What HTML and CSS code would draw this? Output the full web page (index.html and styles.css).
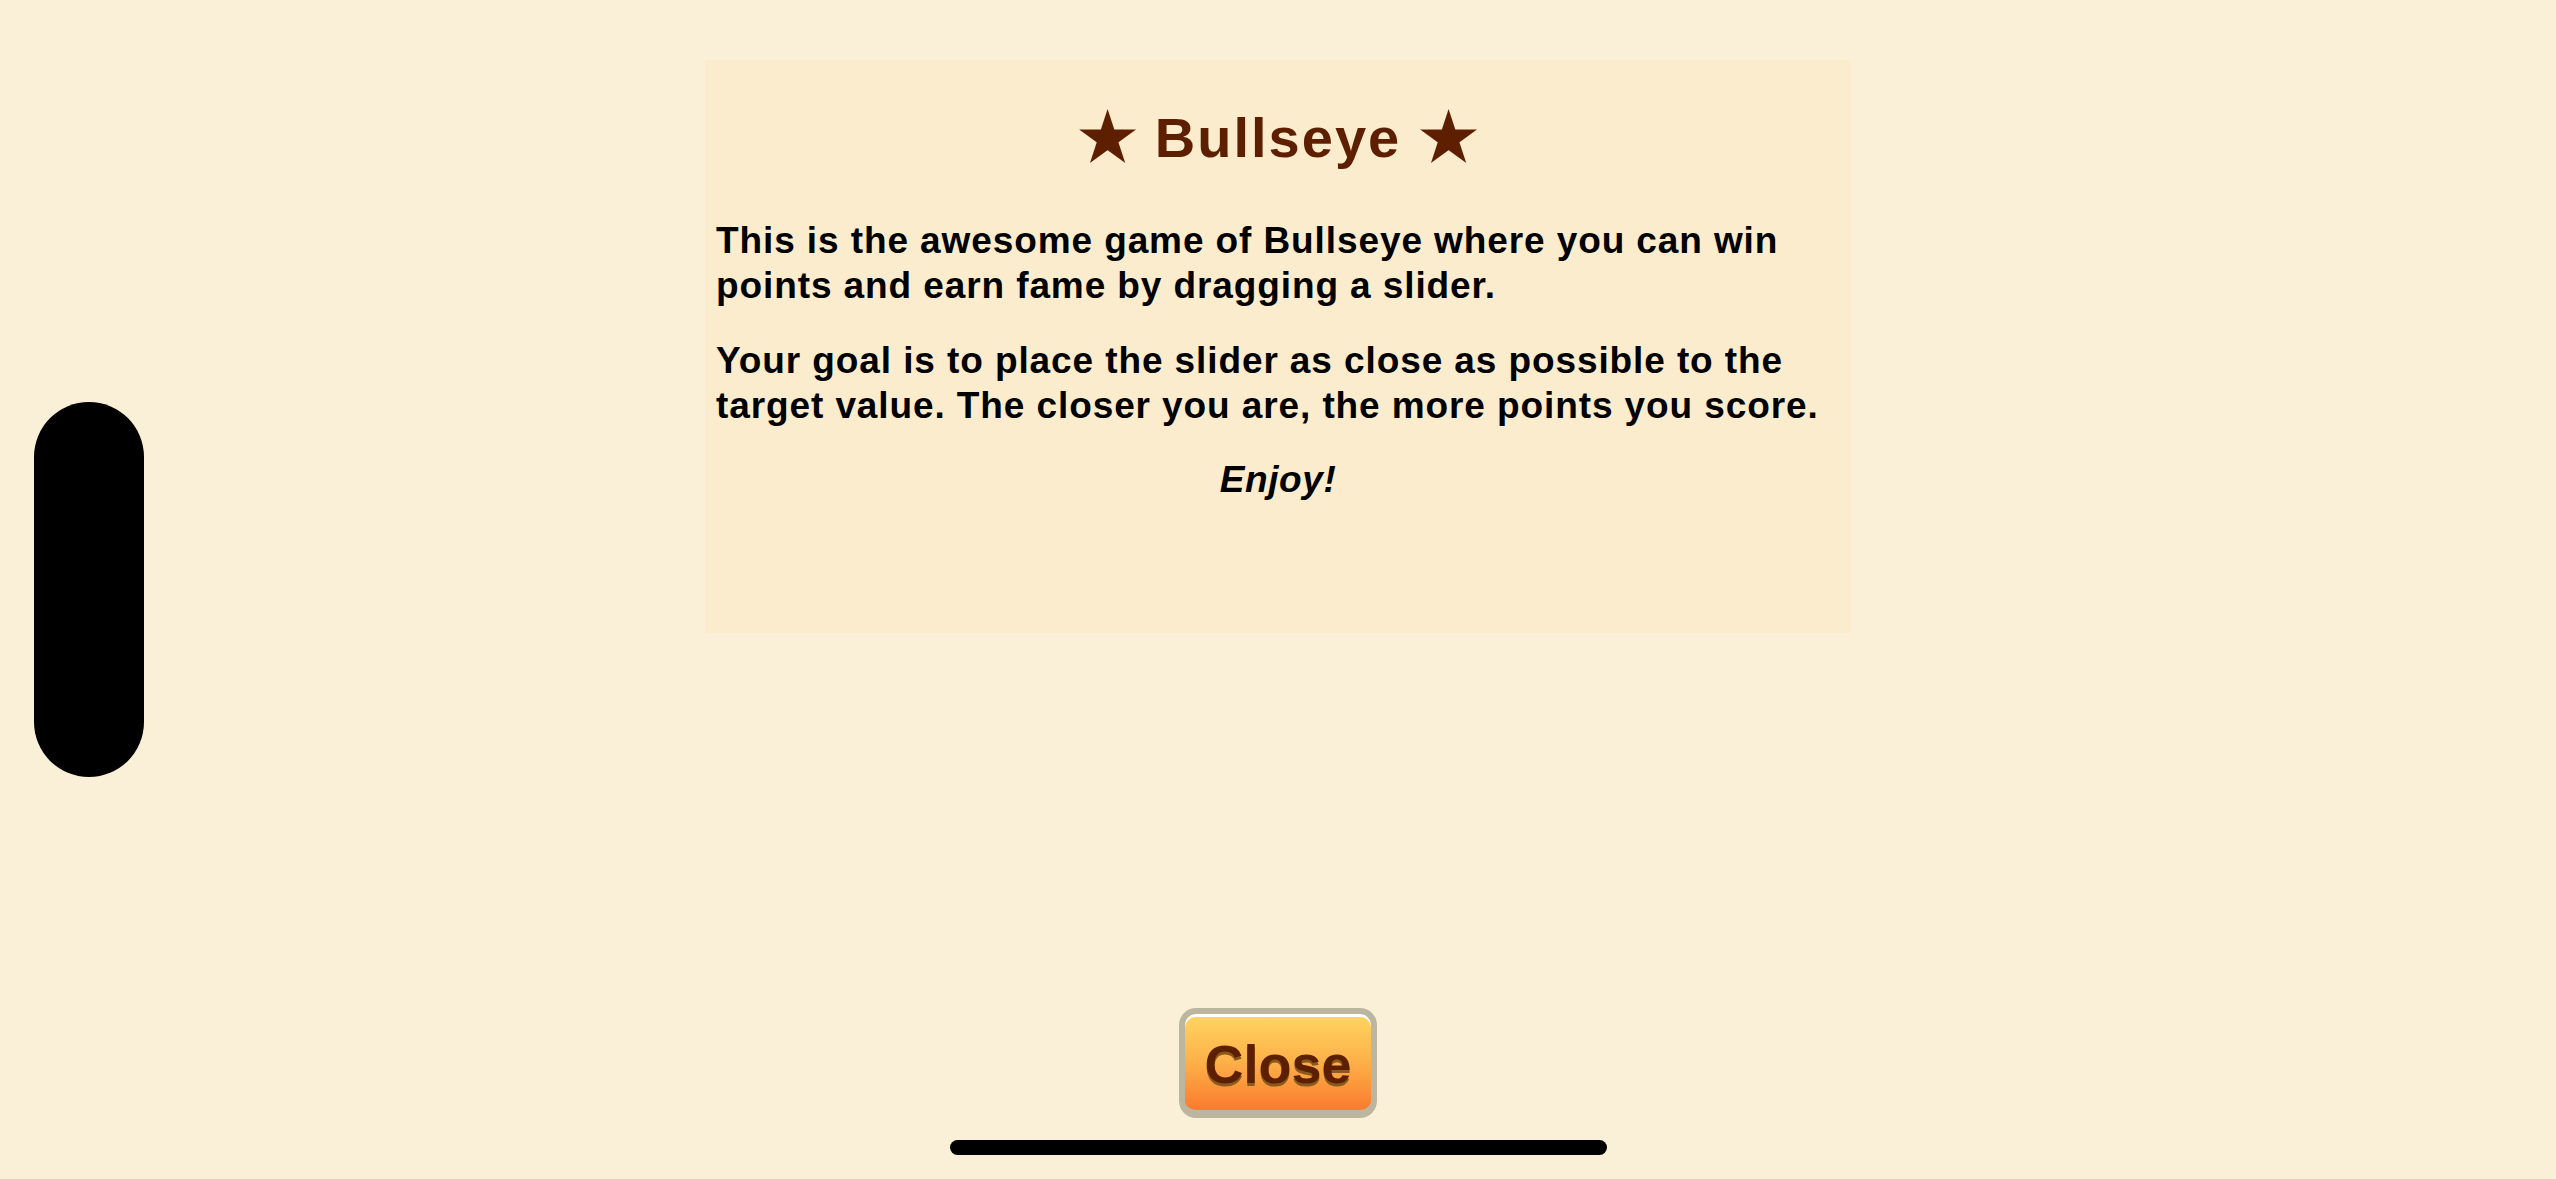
FILE: index.html
```html
<!DOCTYPE html>
<html lang="en">
<head>
<meta charset="utf-8">
<title>Bullseye</title>
<link rel="stylesheet" href="styles.css">
</head>
<body>
<div class="island"></div>
<main class="screen">
  <section class="panel">
    <h1 class="title"><span class="star">&#9733;</span> Bullseye <span class="star">&#9733;</span></h1>
    <p class="text">This is the awesome game of Bullseye where you can win points and earn fame by dragging a slider.</p>
    <p class="text">Your goal is to place the slider as close as possible to the target value. The closer you are, the more points you score.</p>
    <p class="enjoy">Enjoy!</p>
  </section>
  <button class="close-btn" type="button">Close</button>
</main>
<div class="home-indicator"></div>
</body>
</html>
```
FILE: styles.css
```css
html, body {
  margin: 0;
  padding: 0;
}

body {
  background: #faf0d7;
  font-family: "Liberation Sans", Arial, sans-serif;
  width: 2556px;
  height: 1179px;
  overflow: hidden;
  position: relative;
}

.screen {
  display: flex;
  flex-direction: column;
  align-items: center;
  height: 1179px;
  box-sizing: border-box;
  padding: 60px 0 61px;
}

.panel {
  width: 1146px;
  height: 573px;
  box-sizing: border-box;
  background: #fbecce;
  padding: 50px 11px 0 11px;
}

.title {
  margin: 0;
  text-align: center;
  font-size: 56px;
  line-height: 56px;
  font-weight: bold;
  letter-spacing: 2px;
  color: #5e1f00;
}

.star {
  font-size: 66px;
  line-height: 0;
  vertical-align: -3px;
  letter-spacing: 0;
}

.text {
  margin: 52px 0 0;
  font-size: 37px;
  line-height: 45px;
  font-weight: bold;
  color: #000;
  letter-spacing: 0.9px;
}

.text + .text {
  margin-top: 30px;
}

.enjoy {
  margin: 29px 0 0;
  text-align: center;
  font-size: 37px;
  line-height: 45px;
  font-weight: bold;
  font-style: italic;
  color: #000;
  letter-spacing: 0.6px;
}

.close-btn {
  margin-top: auto;
  width: 198px;
  height: 110px;
  box-sizing: border-box;
  border: 6px solid #bcb6a0;
  border-bottom-width: 8px;
  border-radius: 17px;
  background: linear-gradient(to bottom, #ffd560 0%, #fdb049 50%, #fa7b2c 100%);
  box-shadow: inset 0 3px 0 #ffffff;
  font-family: "Liberation Sans", Arial, sans-serif;
  font-size: 54px;
  font-weight: bold;
  color: #5c1f00;
  text-shadow: 0 3px 0 #8a5a1c;
  padding: 4px 0 0;
  cursor: pointer;
}

.island {
  position: absolute;
  left: 34px;
  top: 402px;
  width: 110px;
  height: 375px;
  border-radius: 55px;
  background: #000;
}

.home-indicator {
  position: absolute;
  left: 950px;
  top: 1140px;
  width: 657px;
  height: 15px;
  border-radius: 8px;
  background: #000;
}
```
